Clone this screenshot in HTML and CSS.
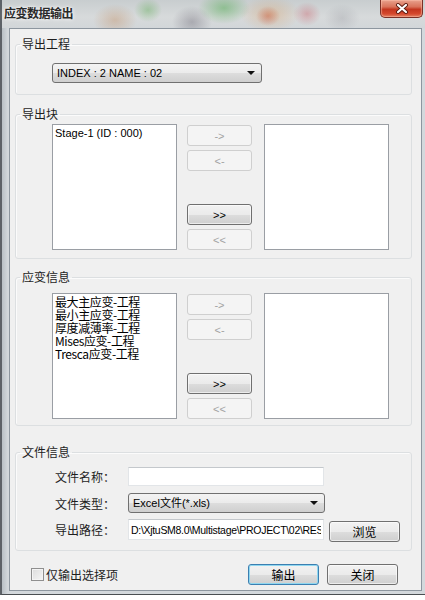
FILE: index.html
```html
<!DOCTYPE html>
<html lang="zh-CN">

<head>
    <meta charset="UTF-8">
    <meta name="viewport" content="width=device-width, initial-scale=1.0">
    <title>应变数据输出</title>
    <link rel="stylesheet" href="styles.css">
</head>

<body>
    <div class="window">
        <div class="titlebar">
            <span class="title">应变数据输出</span>
            <button class="close-btn" title="关闭">
                <svg width="14" height="11" viewBox="0 0 14 11">
                    <path d="M3 2 L11 9 M11 2 L3 9" stroke="#5a1a10" stroke-width="4" stroke-linecap="round" />
                    <path d="M3 2 L11 9 M11 2 L3 9" stroke="#ffffff" stroke-width="2.2" stroke-linecap="round" />
                </svg>
            </button>
        </div>

        <div class="client">
            <!-- export project -->
            <fieldset class="group group-project">
                <legend>导出工程</legend>
                <div class="group-body">
                    <div class="combo combo-project">
                        <span>INDEX : 2 NAME : 02</span>
                        <span class="arrow"></span>
                    </div>
                </div>
            </fieldset>

            <!-- export blocks -->
            <fieldset class="group group-blocks">
                <legend>导出块</legend>
                <div class="transfer">
                    <ul class="listbox">
                        <li>Stage-1 (ID : 000)</li>
                    </ul>
                    <div class="move-btns">
                        <button class="btn" disabled>-&gt;</button>
                        <button class="btn" disabled>&lt;-</button>
                        <button class="btn btn-on push-down">&gt;&gt;</button>
                        <button class="btn" disabled>&lt;&lt;</button>
                    </div>
                    <ul class="listbox"></ul>
                </div>
            </fieldset>

            <!-- strain info -->
            <fieldset class="group group-strain">
                <legend>应变信息</legend>
                <div class="transfer">
                    <ul class="listbox cjk-list">
                        <li>最大主应变-工程</li>
                        <li>最小主应变-工程</li>
                        <li>厚度减薄率-工程</li>
                        <li>Mises应变-工程</li>
                        <li>Tresca应变-工程</li>
                    </ul>
                    <div class="move-btns">
                        <button class="btn" disabled>-&gt;</button>
                        <button class="btn" disabled>&lt;-</button>
                        <button class="btn btn-on push-down">&gt;&gt;</button>
                        <button class="btn" disabled>&lt;&lt;</button>
                    </div>
                    <ul class="listbox"></ul>
                </div>
            </fieldset>

            <!-- file info -->
            <fieldset class="group group-file">
                <legend>文件信息</legend>
                <div class="file-body">
                    <div class="form-row row-name">
                        <label for="fileName">文件名称：</label>
                        <input type="text" id="fileName" class="textbox">
                    </div>
                    <div class="form-row row-type">
                        <label>文件类型：</label>
                        <div class="combo combo-type">
                            <span>Excel文件(*.xls)</span>
                            <span class="arrow"></span>
                        </div>
                    </div>
                    <div class="form-row row-path">
                        <label for="filePath">导出路径：</label>
                        <input type="text" id="filePath" class="textbox path" value="D:\XjtuSM8.0\Multistage\PROJECT\02\RESULT">
                        <button class="btn btn-on browse">浏览</button>
                    </div>
                </div>
            </fieldset>

            <div class="footer">
                <label class="check">
                    <span class="checkbox"></span>
                    仅输出选择项
                </label>
                <button class="btn btn-on btn-default">输出</button>
                <button class="btn btn-on">关闭</button>
            </div>
        </div>
    </div>
</body>

</html>
```

FILE: styles.css
```css
body {
    margin: 0;
    background-color: #ffffff;
    font-family: "Liberation Sans", "Noto Sans CJK SC", sans-serif;
    font-size: 11px;
    color: #000;
}

.window {
    width: 425px;
    height: 595px;
    box-sizing: border-box;
    border-left: 2px solid #5d6268;
    border-bottom: 1px solid #4a4e52;
    background: linear-gradient(90deg, #b9c0c6 0, #d3d8dc 6px, #d3d8dc 100%);
    display: flex;
    flex-direction: column;
}

/* aero glass title bar with blurred desktop behind it */
.titlebar {
    height: 28px;
    flex: none;
    display: flex;
    align-items: flex-start;
    justify-content: space-between;
    background:
        radial-gradient(ellipse 22px 16px at 113px 20px, rgba(190, 130, 80, 0.35), transparent),
        radial-gradient(ellipse 14px 12px at 146px 10px, rgba(90, 170, 80, 0.4), transparent),
        radial-gradient(ellipse 20px 16px at 190px 22px, rgba(90, 85, 100, 0.35), transparent),
        radial-gradient(ellipse 26px 16px at 222px 8px, rgba(80, 170, 80, 0.5), transparent),
        radial-gradient(ellipse 30px 18px at 268px 14px, rgba(220, 150, 80, 0.35), transparent),
        radial-gradient(ellipse 12px 10px at 266px 16px, rgba(190, 60, 50, 0.45), transparent),
        radial-gradient(ellipse 14px 12px at 305px 14px, rgba(200, 80, 90, 0.35), transparent),
        radial-gradient(ellipse 18px 14px at 340px 18px, rgba(120, 120, 130, 0.22), transparent),
        linear-gradient(180deg, #c8cdcf 0%, #d7dadb 60%, #d2d6d9 100%);
}

.title {
    margin: 5px 0 0 2px;
    font-family: "Noto Sans CJK SC", sans-serif;
    font-size: 12px;
    line-height: 16px;
    font-weight: bold;
    color: #2a2a2a;
    text-shadow: 0 0 4px rgba(255, 255, 255, 0.9), 0 0 2px rgba(255, 255, 255, 0.9);
    letter-spacing: -0.5px;
}

.close-btn {
    width: 43px;
    height: 18px;
    margin-right: 2px;
    padding: 0;
    border: 1px solid #7b3026;
    border-top: none;
    border-radius: 0 0 5px 5px;
    background: linear-gradient(180deg, #e8a08c 0%, #d9735b 40%, #c3361f 55%, #d4472c 80%, #e27a5a 100%);
    box-shadow: inset 0 0 1px 1px rgba(255, 200, 180, 0.5);
    display: flex;
    align-items: center;
    justify-content: center;
}

.client {
    height: 563px;
    margin: 0 3px 0 7px;
    box-sizing: border-box;
    border: 1px solid #8d969f;
    background-color: #f0f0f0;
    padding: 0 9px 0 5px;
}

/* group boxes */
.group {
    margin: 0;
    padding: 0;
    border: 1px solid #dcdfe1;
    border-radius: 3px;
    box-shadow: inset 1px 1px 0 #fbfbfb;
    min-width: 0;
}

.group legend {
    margin-left: 4px;
    padding: 0 2px;
    font-family: "Noto Sans CJK SC", sans-serif;
    font-size: 12px;
    line-height: 14px;
    color: #1e1e1e;
}

.group-project {
    margin-top: 8px;
}

.group-project .group-body {
    padding: 12px 0 11px 36px;
}

.group-blocks {
    margin-top: 12px;
}

.group-blocks .transfer {
    padding: 3px 0 8px 36px;
}

.group-strain {
    margin-top: 11px;
}

.group-strain .transfer {
    padding: 9px 0 6px 36px;
}

.group-file {
    margin-top: 19px;
}

.file-body {
    padding: 8px 0 8px 39px;
}

/* combo boxes */
.combo {
    height: 20px;
    box-sizing: border-box;
    border: 1px solid #707070;
    border-radius: 3px;
    background: linear-gradient(180deg, #f3f3f3 0%, #ebebeb 50%, #dddddd 51%, #cfcfcf 100%);
    display: flex;
    align-items: center;
    justify-content: space-between;
    padding: 0 6px 0 4px;
    line-height: 18px;
}

.combo-project {
    width: 210px;
}

.combo-type {
    width: 197px;
}

.arrow {
    width: 0;
    height: 0;
    border-left: 4px solid transparent;
    border-right: 4px solid transparent;
    border-top: 4px solid #111;
}

/* list transfer */
.transfer {
    display: flex;
    align-items: flex-start;
}

.listbox {
    width: 125px;
    height: 126px;
    box-sizing: border-box;
    margin: 0;
    padding: 2px 2px;
    list-style: none;
    background-color: #ffffff;
    border: 1px solid #9a9ea4;
    line-height: 13px;
}

.cjk-list {
    padding-top: 1px;
    font-family: "Noto Sans CJK SC", sans-serif;
    font-size: 12px;
    line-height: 13px;
    letter-spacing: -0.4px;
}

.move-btns {
    width: 65px;
    height: 126px;
    margin: 0 12px 0 10px;
    padding: 1px 0 0;
    box-sizing: border-box;
    display: flex;
    flex-direction: column;
    gap: 4px;
}

.move-btns .push-down {
    margin-top: auto;
}

/* buttons */
.btn {
    height: 21px;
    box-sizing: border-box;
    padding: 0;
    font-family: "Liberation Sans", "Noto Sans CJK SC", sans-serif;
    font-size: 11px;
    color: #a3a3a3;
    background-color: #f4f4f4;
    border: 1px solid #cfcfcf;
    border-radius: 3px;
}

.btn-on {
    color: #000;
    border-color: #707070;
    background: linear-gradient(180deg, #f2f2f2 0%, #ebebeb 50%, #dddddd 51%, #cfcfcf 100%);
    box-shadow: inset 0 0 0 1px rgba(255, 255, 255, 0.6);
}

.btn-default {
    border-color: #3c7fb1;
    box-shadow: inset 0 0 0 1px #8fd7f0;
}

/* file info rows */
.form-row {
    display: flex;
    align-items: center;
}

.form-row label {
    width: 73px;
    flex: none;
    font-family: "Noto Sans CJK SC", sans-serif;
    font-size: 12px;
    color: #1e1e1e;
}

.row-name {
    height: 19px;
}

.row-type {
    height: 20px;
    margin-top: 7px;
}

.row-path {
    height: 23px;
    margin-top: 6px;
    align-items: flex-start;
}

.row-path label {
    line-height: 21px;
}

.textbox {
    width: 196px;
    height: 19px;
    box-sizing: border-box;
    margin: 0;
    padding: 0 2px;
    border: 1px solid #e2e5e8;
    border-top-color: #c4c8cc;
    background-color: #ffffff;
    font-family: "Liberation Sans", sans-serif;
    font-size: 11px;
    outline: none;
}

.textbox.path {
    height: 21px;
    font-size: 10.5px;
    letter-spacing: -0.3px;
}

.browse {
    width: 71px;
    margin: 2px 0 0 5px;
    font-family: "Noto Sans CJK SC", sans-serif;
    font-size: 12px;
}

/* bottom row */
.footer {
    margin-top: 13px;
    padding: 0 14px 0 16px;
    display: flex;
    align-items: center;
    gap: 8px;
}

.footer .btn {
    width: 71px;
    font-family: "Noto Sans CJK SC", sans-serif;
    font-size: 12px;
}

.footer .btn-default {
    margin-left: auto;
}

.check {
    display: flex;
    align-items: center;
    gap: 2px;
    font-family: "Noto Sans CJK SC", sans-serif;
    font-size: 12px;
    color: #1e1e1e;
}

.checkbox {
    width: 13px;
    height: 13px;
    box-sizing: border-box;
    border: 1px solid #8f8f8f;
    background: linear-gradient(135deg, #dcdcdc, #f6f6f6);
    box-shadow: inset 0 0 0 1px #f4f4f4;
}
```
